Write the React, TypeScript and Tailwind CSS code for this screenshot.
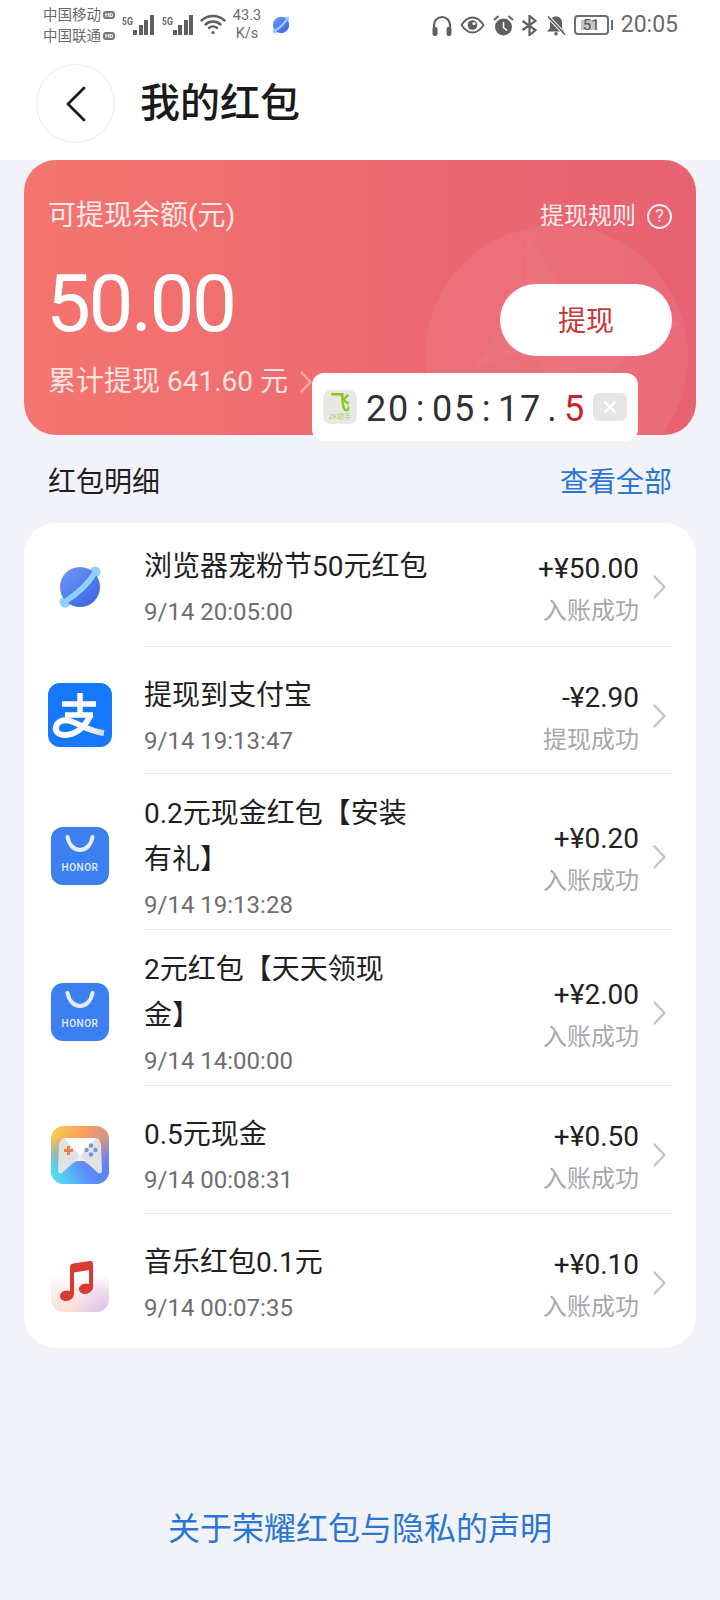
import React from "react";

const FONT = "font-['Roboto','Noto_Sans_CJK_SC',sans-serif]";

const Chevron = ({ className }: { className: string }) => (
  <svg className={className} viewBox="0 0 13 24" fill="none" stroke="currentColor" strokeWidth="2.4" strokeLinecap="round" strokeLinejoin="round">
    <path d="M1.500 1.500L11.500 12L1.500 22.500" />
  </svg>
);

const Planet = ({ size }: { size: number }) => (
  <svg width={size} height={size} viewBox="0 0 44 44">
    <defs>
      <linearGradient id="planet" x1="0.1" y1="0" x2="0.9" y2="1">
        <stop offset="0" stopColor="#6f97f8" />
        <stop offset="1" stopColor="#3a62e0" />
      </linearGradient>
    </defs>
    <circle cx="37" cy="7" r="5.500" fill="#8ed3f7" />
    <circle cx="7" cy="37" r="5.500" fill="#8ed3f7" />
    <circle cx="22" cy="22" r="20" fill="url(#planet)" />
    <path d="M36 9C30 19 20 28 8 36" stroke="#8ed3f7" strokeWidth="5.500" fill="none" strokeLinecap="round" />
  </svg>
);

const AlipayIcon = () => (
  <svg width="64" height="64" viewBox="0 0 64 64">
    <defs>
      <linearGradient id="ribbon" x1="0" y1="0" x2="1" y2="0">
        <stop offset="0" stopColor="#ffffff" />
        <stop offset="0.6" stopColor="#ffffff" />
        <stop offset="1" stopColor="#c5d8f7" />
      </linearGradient>
    </defs>
    <rect width="64" height="64" rx="12" fill="#1677ff" />
    <path d="M14 21h34M32 10v22M17 32h28" stroke="#fff" strokeWidth="5.500" fill="none" />
    <path d="M42 33C36 46 26 52 17 52C10 52 7 48 8 44C9 38 16 36 22 38C32 41 40 48 56 50" stroke="url(#ribbon)" strokeWidth="6" fill="none" />
  </svg>
);

const HonorIcon = () => (
  <div className="relative w-[58px] h-[58px] rounded-[12px] bg-[#3c7ff0] flex flex-col items-center">
    <svg className="mt-[8px]" width="30" height="18" viewBox="0 0 30 18" fill="none">
      <path d="M2.500 2C4 10 9 15 15 15S26 10 27.500 2" stroke="#e4ecfc" strokeWidth="4" strokeLinecap="round" />
    </svg>
    <span className="mt-[10px] text-[10px] leading-[10px] font-medium tracking-[0.5px] text-[#e4edfd] font-['Roboto',sans-serif]">HONOR</span>
  </div>
);

const GameIcon = () => (
  <svg width="58" height="58" viewBox="0 0 58 58">
    <defs>
      <linearGradient id="gameA" x1="0" y1="0" x2="1" y2="0.6">
        <stop offset="0" stopColor="#f4d54e" />
        <stop offset="0.45" stopColor="#fb9e5b" />
        <stop offset="1" stopColor="#b98ea8" />
      </linearGradient>
      <linearGradient id="gameB" x1="0" y1="1" x2="1" y2="0.4">
        <stop offset="0" stopColor="#4ff0f5" />
        <stop offset="0.55" stopColor="#5a8cf8" />
        <stop offset="1" stopColor="#5f7cf5" />
      </linearGradient>
      <linearGradient id="gameC" x1="0" y1="0" x2="0" y2="1">
        <stop offset="0.2" stopColor="#000" />
        <stop offset="0.7" stopColor="#fff" />
      </linearGradient>
      <mask id="gameM"><rect width="58" height="58" fill="url(#gameC)" /></mask>
      <clipPath id="gameR"><rect width="58" height="58" rx="13" /></clipPath>
    </defs>
    <g clipPath="url(#gameR)">
      <rect width="58" height="58" fill="url(#gameA)" />
      <rect width="58" height="58" fill="url(#gameB)" mask="url(#gameM)" />
    </g>
    <path d="M14 12h30c3 0 5 2 6 6l1 27c0 2-2 3-4 2L36 37c-2-2-4-3-7-3s-5 1-7 3L11 47c-2 1-4 0-4-2l1-27c1-4 3-6 6-6z" fill="#e2e2e4" />
    <path d="M13 12h32L29 30z" fill="#ffffff" />
    <path d="M29 30l8 8-4-3h-8l-4 3z" fill="#f1f1f3" />
    <path d="M13 23h9v3h-9zM16 20h3v9h-3z" fill="#f07f45" />
    <g fill="#6f9bdc">
      <circle cx="40" cy="19.500" r="2.200" />
      <circle cx="40" cy="28.500" r="2.200" />
      <circle cx="35.500" cy="24" r="2.200" />
      <circle cx="44.500" cy="24" r="2.200" />
    </g>
  </svg>
);

const MusicIcon = () => (
  <svg width="58" height="58" viewBox="0 0 58 58">
    <defs>
      <linearGradient id="musicBg" x1="0" y1="0" x2="0" y2="1">
        <stop offset="0.35" stopColor="#ffffff" />
        <stop offset="1" stopColor="#fcdcd2" />
      </linearGradient>
      <radialGradient id="musicTint" cx="0.95" cy="1" r="0.6">
        <stop offset="0" stopColor="#dcc0f4" />
        <stop offset="1" stopColor="#dcc0f4" stopOpacity="0" />
      </radialGradient>
    </defs>
    <rect width="58" height="58" rx="13" fill="url(#musicBg)" />
    <rect width="58" height="58" rx="13" fill="url(#musicTint)" />
    <g transform="translate(0 4)">
      <path d="M19 9c0-2 1-3 3-3.500L39 3c2-.3 3 1 3 3v23c0 4-4 7-8 7s-6-2.500-6-5 3-5.500 7-5.500c1 0 2 .2 3 .5V12L23 14.500V36c0 4-4 7-8 7s-6-2.500-6-5 3-5.500 7-5.500c1 0 2 .2 3 .5z" fill="#d83a36" />
    </g>
  </svg>
);

const SignalBars = () => (
  <div className="flex items-end gap-[1.500px] h-[20px]">
    <div className="w-[4px] h-[5px] bg-[#5f5f5f]" />
    <div className="w-[4px] h-[10px] bg-[#5f5f5f]" />
    <div className="w-[4px] h-[15px] bg-[#5f5f5f]" />
    <div className="w-[4px] h-[20px] bg-[#5f5f5f]" />
  </div>
);

const Carrier = ({ name }: { name: string }) => (
  <div className="flex items-center gap-[2px] whitespace-nowrap">
    {name}
    <span className="w-[12px] h-[8px] rounded-[3px] bg-[#777] text-[6px] leading-[8px] text-center text-white font-bold">HD</span>
  </div>
);

const StatusBar = () => (
  <div className="h-[50px] flex items-center justify-between pl-[43px] pr-[42px] text-[#6a6a6a]">
    <div className="flex items-center">
      <div className="flex flex-col text-[14.500px] leading-[21px] w-[79px] pt-[1px]">
        <Carrier name="中国移动" />
        <Carrier name="中国联通" />
      </div>
      <div className="flex items-end">
        <span className="text-[11px] leading-[10px] font-bold self-start mt-[2px] w-[11px] scale-x-[0.8] origin-left">5G</span>
        <SignalBars />
      </div>
      <div className="flex items-end ml-[8px]">
        <span className="text-[11px] leading-[10px] font-bold self-start mt-[2px] w-[11px] scale-x-[0.8] origin-left">5G</span>
        <SignalBars />
      </div>
      <svg className="ml-[7px]" width="26" height="22" viewBox="0 0 26 22" fill="none" stroke="#5f5f5f" strokeWidth="2.400" strokeLinecap="round">
        <path d="M1.500 6.500c6.500-6 16.500-6 23 0" />
        <path d="M5.500 10.500c4.300-4 10.700-4 15 0" />
        <path d="M9 14c2.300-2 5.700-2 8 0" />
        <circle cx="13" cy="18.500" r="1.600" fill="#5f5f5f" stroke="none" />
      </svg>
      <div className="ml-[6px] w-[30px] flex flex-col items-center text-[14.500px] leading-[18px] mt-[-1px]">
        <span>43.3</span>
        <span>K/s</span>
      </div>
      <div className="ml-[10px]"><Planet size={18} /></div>
    </div>
    <div className="flex items-center">
      <svg width="20" height="21" viewBox="0 0 20 21" fill="none">
        <path d="M2 14V10a8 8 0 0 1 16 0v4" stroke="#5f5f5f" strokeWidth="2.200" />
        <rect x="0.500" y="12" width="5" height="9" rx="2" fill="#5f5f5f" />
        <rect x="14.500" y="12" width="5" height="9" rx="2" fill="#5f5f5f" />
      </svg>
      <svg className="ml-[8px]" width="25" height="18" viewBox="0 0 25 18" fill="none">
        <path d="M1.500 9C5 3.500 8.500 1.500 12.500 1.500S20 3.500 23.500 9c-3.500 5.500-7 7.500-11 7.500S5 14.500 1.500 9z" stroke="#5f5f5f" strokeWidth="1.800" />
        <circle cx="12.500" cy="9" r="4.800" fill="#5f5f5f" />
        <circle cx="14" cy="7.500" r="1.600" fill="#fff" />
      </svg>
      <svg className="ml-[8px]" width="21" height="21" viewBox="0 0 21 21" fill="none">
        <circle cx="10.500" cy="12" r="8.500" fill="#5f5f5f" />
        <path d="M10.500 7v5.500l3.500 3" stroke="#fff" strokeWidth="1.600" />
        <path d="M1.500 4.500L5 1.500M19.500 4.500L16 1.500" stroke="#5f5f5f" strokeWidth="1.800" strokeLinecap="round" />
      </svg>
      <svg className="ml-[7px]" width="17" height="21" viewBox="0 0 17 21" fill="none" stroke="#5f5f5f" strokeWidth="2.200">
        <path d="M1.500 6l13 9-6 5V1l6 5-13 9" />
      </svg>
      <svg className="ml-[8px]" width="20" height="21" viewBox="0 0 20 21" fill="none">
        <path d="M10 1.500c-3.500 0-6 2.500-6 6V13l-3 3.500h18L16 13V7.500c0-3.500-2.500-6-6-6z" fill="#5f5f5f" />
        <circle cx="10" cy="18.700" r="1.800" fill="#5f5f5f" />
        <path d="M2 1.500l17 18" stroke="#fff" strokeWidth="3.500" />
        <path d="M2 1.500l17 18" stroke="#5f5f5f" strokeWidth="1.800" />
      </svg>
      <div className="ml-[8px] relative w-[35px] h-[20px] rounded-[4px] border-2 border-[#6f6f6f] flex items-center justify-center text-[15px] leading-[16px] text-[#555]">
        <div className="absolute left-[5px] top-[3px] w-[16px] h-[10px] bg-[#c4c4c4]" />
        <span className="relative">51</span>
      </div>
      <div className="ml-[2px] w-[2px] h-[10px] bg-[#6f6f6f]" />
      <span className="ml-[8px] text-[23px] leading-[28px]">20:05</span>
    </div>
  </div>
);

const TimerChars = "20:05:17.5".split("");

const FloatingTimer = () => (
  <div className="absolute left-[312px] top-[373px] w-[326px] h-[68px] bg-white rounded-[12px] flex items-center pl-[11px]">
    <div className="w-[34px] h-[34px] rounded-[8px] bg-[#e7e9e4] flex flex-col items-center justify-center">
      <span className="text-[20px] leading-[20px] font-bold text-[#86c91a]">飞</span>
      <span className="text-[7px] leading-[8px] text-[#a8d45c]">ZK助手</span>
    </div>
    <div className="ml-[8px] mt-[3px] flex font-['Roboto',sans-serif] text-[36px] leading-[40px] text-[#2e3236]">
      {TimerChars.map((c, i) => (
        <span key={i} className={`w-[22px] text-center ${i === TimerChars.length - 1 ? "text-[#c8232c]" : ""}`}>{c}</span>
      ))}
    </div>
    <div className="ml-[8px] w-[34px] h-[28px] rounded-[6px] bg-[#e6e6e6] flex items-center justify-center">
      <svg width="14" height="14" viewBox="0 0 14 14" stroke="#fff" strokeWidth="2.400"><path d="M1.500 1.500l11 11M12.500 1.500l-11 11" /></svg>
    </div>
  </div>
);

const BalanceCard = () => (
  <div className="relative mx-[24px] h-[275px] rounded-[32px] overflow-hidden bg-gradient-to-r from-[#f4756f] via-[#ed6a70] to-[#e86272] text-white">
    <svg className="absolute left-[401px] top-[65px]" width="263" height="263" viewBox="0 0 263 263">
      <circle cx="131.500" cy="131.500" r="131.500" fill="#fff" fillOpacity="0.06" />
      <path d="M102 8L135 62L205 90L255 98L205 125L150 190L105 125L45 145L78 105L102 60Z" fill="#fff" fillOpacity="0.04" />
    </svg>
    <div className="relative flex flex-col h-full pl-[24px] pr-[24px] pt-[36px]">
      <div className="flex items-center justify-between h-[40px]">
        <span className="text-[28px] leading-[40px] text-[#fde9e6]">可提现余额(元)</span>
        <div className="flex items-center text-[24px] leading-[40px] text-[#fdeceb]">
          提现规则
          <span className="ml-[11px] w-[25px] h-[25px] rounded-full border-2 border-[#fdeceb] flex items-center justify-center text-[18px] leading-[20px]">?</span>
        </div>
      </div>
      <div className="flex items-center justify-between mt-[23px] h-[90px]">
        <span className="ml-[-2px] text-[80px] leading-[90px] tracking-[-2.500px] font-normal">50.00</span>
        <div className="mt-[32px] pt-[3px] w-[172px] h-[72px] rounded-full bg-white flex items-center justify-center text-[28px] text-[#c8363c]">提现</div>
      </div>
      <div className="flex items-center mt-[13px] h-[40px] text-[#fde4e1]">
        <span className="text-[28px] leading-[40px]">累计提现 641.60 元</span>
        <Chevron className="ml-[12px] w-[12px] h-[22px] text-[#f8a9a4]" />
      </div>
    </div>
  </div>
);

type Detail = {
  title: string[];
  date: string;
  amount: string;
  status: string;
  icon: React.ReactNode;
  pad: string;
  iconPad: string;
};

const details: Detail[] = [
  { title: ["浏览器宠粉节50元红包"], date: "9/14 20:05:00", amount: "+¥50.00", status: "入账成功", icon: <Planet size={44} />, pad: "pt-[21px] pb-[11px]", iconPad: "pt-[4px]" },
  { title: ["提现到支付宝"], date: "9/14 19:13:47", amount: "-¥2.90", status: "提现成功", icon: <AlipayIcon />, pad: "pt-[26px] pb-[9px]", iconPad: "pt-[9px]" },
  { title: ["0.2元现金红包【安装", "有礼】"], date: "9/14 19:13:28", amount: "+¥0.20", status: "入账成功", icon: <HonorIcon />, pad: "pt-[17px] pb-[1px]", iconPad: "pt-[8px]" },
  { title: ["2元红包【天天领现", "金】"], date: "9/14 14:00:00", amount: "+¥2.00", status: "入账成功", icon: <HonorIcon />, pad: "pt-[17px] pb-[1px]", iconPad: "pt-[8px]" },
  { title: ["0.5元现金"], date: "9/14 00:08:31", amount: "+¥0.50", status: "入账成功", icon: <GameIcon />, pad: "pt-[26px] pb-[10px]", iconPad: "pt-[9px]" },
  { title: ["音乐红包0.1元"], date: "9/14 00:07:35", amount: "+¥0.10", status: "入账成功", icon: <MusicIcon />, pad: "pt-[26px] pb-[17px]", iconPad: "pt-[4px]" },
];

const DetailRow = ({ item, last }: { item: Detail; last: boolean }) => (
  <div className="flex items-stretch">
    <div className="w-[120px] shrink-0 flex items-center justify-center pr-[8px]">
      <div className={item.iconPad}>{item.icon}</div>
    </div>
    <div className={`flex-1 flex items-center ${item.pad} ${last ? "" : "border-b border-[#e8e9ec]"}`}>
      <div className="flex-1">
        {item.title.map((line) => (
          <div key={line} className="text-[28px] leading-[46px] text-[#1f1f1f]">{line}</div>
        ))}
        <div className="text-[24px] leading-[45px] text-[#6e6e6e]">{item.date}</div>
      </div>
      <div className="flex flex-col items-end">
        <span className="text-[28px] leading-[42px] text-[#222]">{item.amount}</span>
        <span className="text-[24px] leading-[42px] text-[#a8a8a8]">{item.status}</span>
      </div>
      <Chevron className="ml-[14px] mr-[6px] mb-[6px] w-[13px] h-[24px] text-[#c4c4c4] shrink-0" />
    </div>
  </div>
);

const App: React.FC = () => {
  return (
    <div className={`relative w-[720px] h-[1600px] bg-[#f1f3f8] overflow-hidden ${FONT}`}>
      <header className="bg-white h-[160px]">
        <StatusBar />
        <div className="flex items-center pl-[36px] mt-[14px]">
          <div className="w-[79px] h-[79px] rounded-full border border-[#ececec] flex items-center justify-center">
            <svg width="20" height="36" viewBox="0 0 20 36" fill="none" stroke="#1a1a1a" strokeWidth="2.800" strokeLinecap="round" strokeLinejoin="round">
              <path d="M18 2L2 18l16 16" />
            </svg>
          </div>
          <h1 className="ml-[25px] text-[40px] leading-[50px] font-medium text-[#1a1a1a]">我的红包</h1>
        </div>
      </header>

      <BalanceCard />
      <FloatingTimer />

      <div className="flex items-center justify-between px-[48px] h-[88px] pt-[7px]">
        <span className="text-[28px] text-[#1f1f1f]">红包明细</span>
        <span className="text-[28px] text-[#2b76d0]">查看全部</span>
      </div>

      <div className="mx-[24px] rounded-[32px] bg-white">
        <div className="pr-[24px]">
          {details.map((item, i) => (
            <DetailRow key={item.date} item={item} last={i === details.length - 1} />
          ))}
        </div>
      </div>

      <div className="mt-[157px] text-center text-[32px] leading-[48px] text-[#2b76d0]">关于荣耀红包与隐私的声明</div>
    </div>
  );
};

export default App;
